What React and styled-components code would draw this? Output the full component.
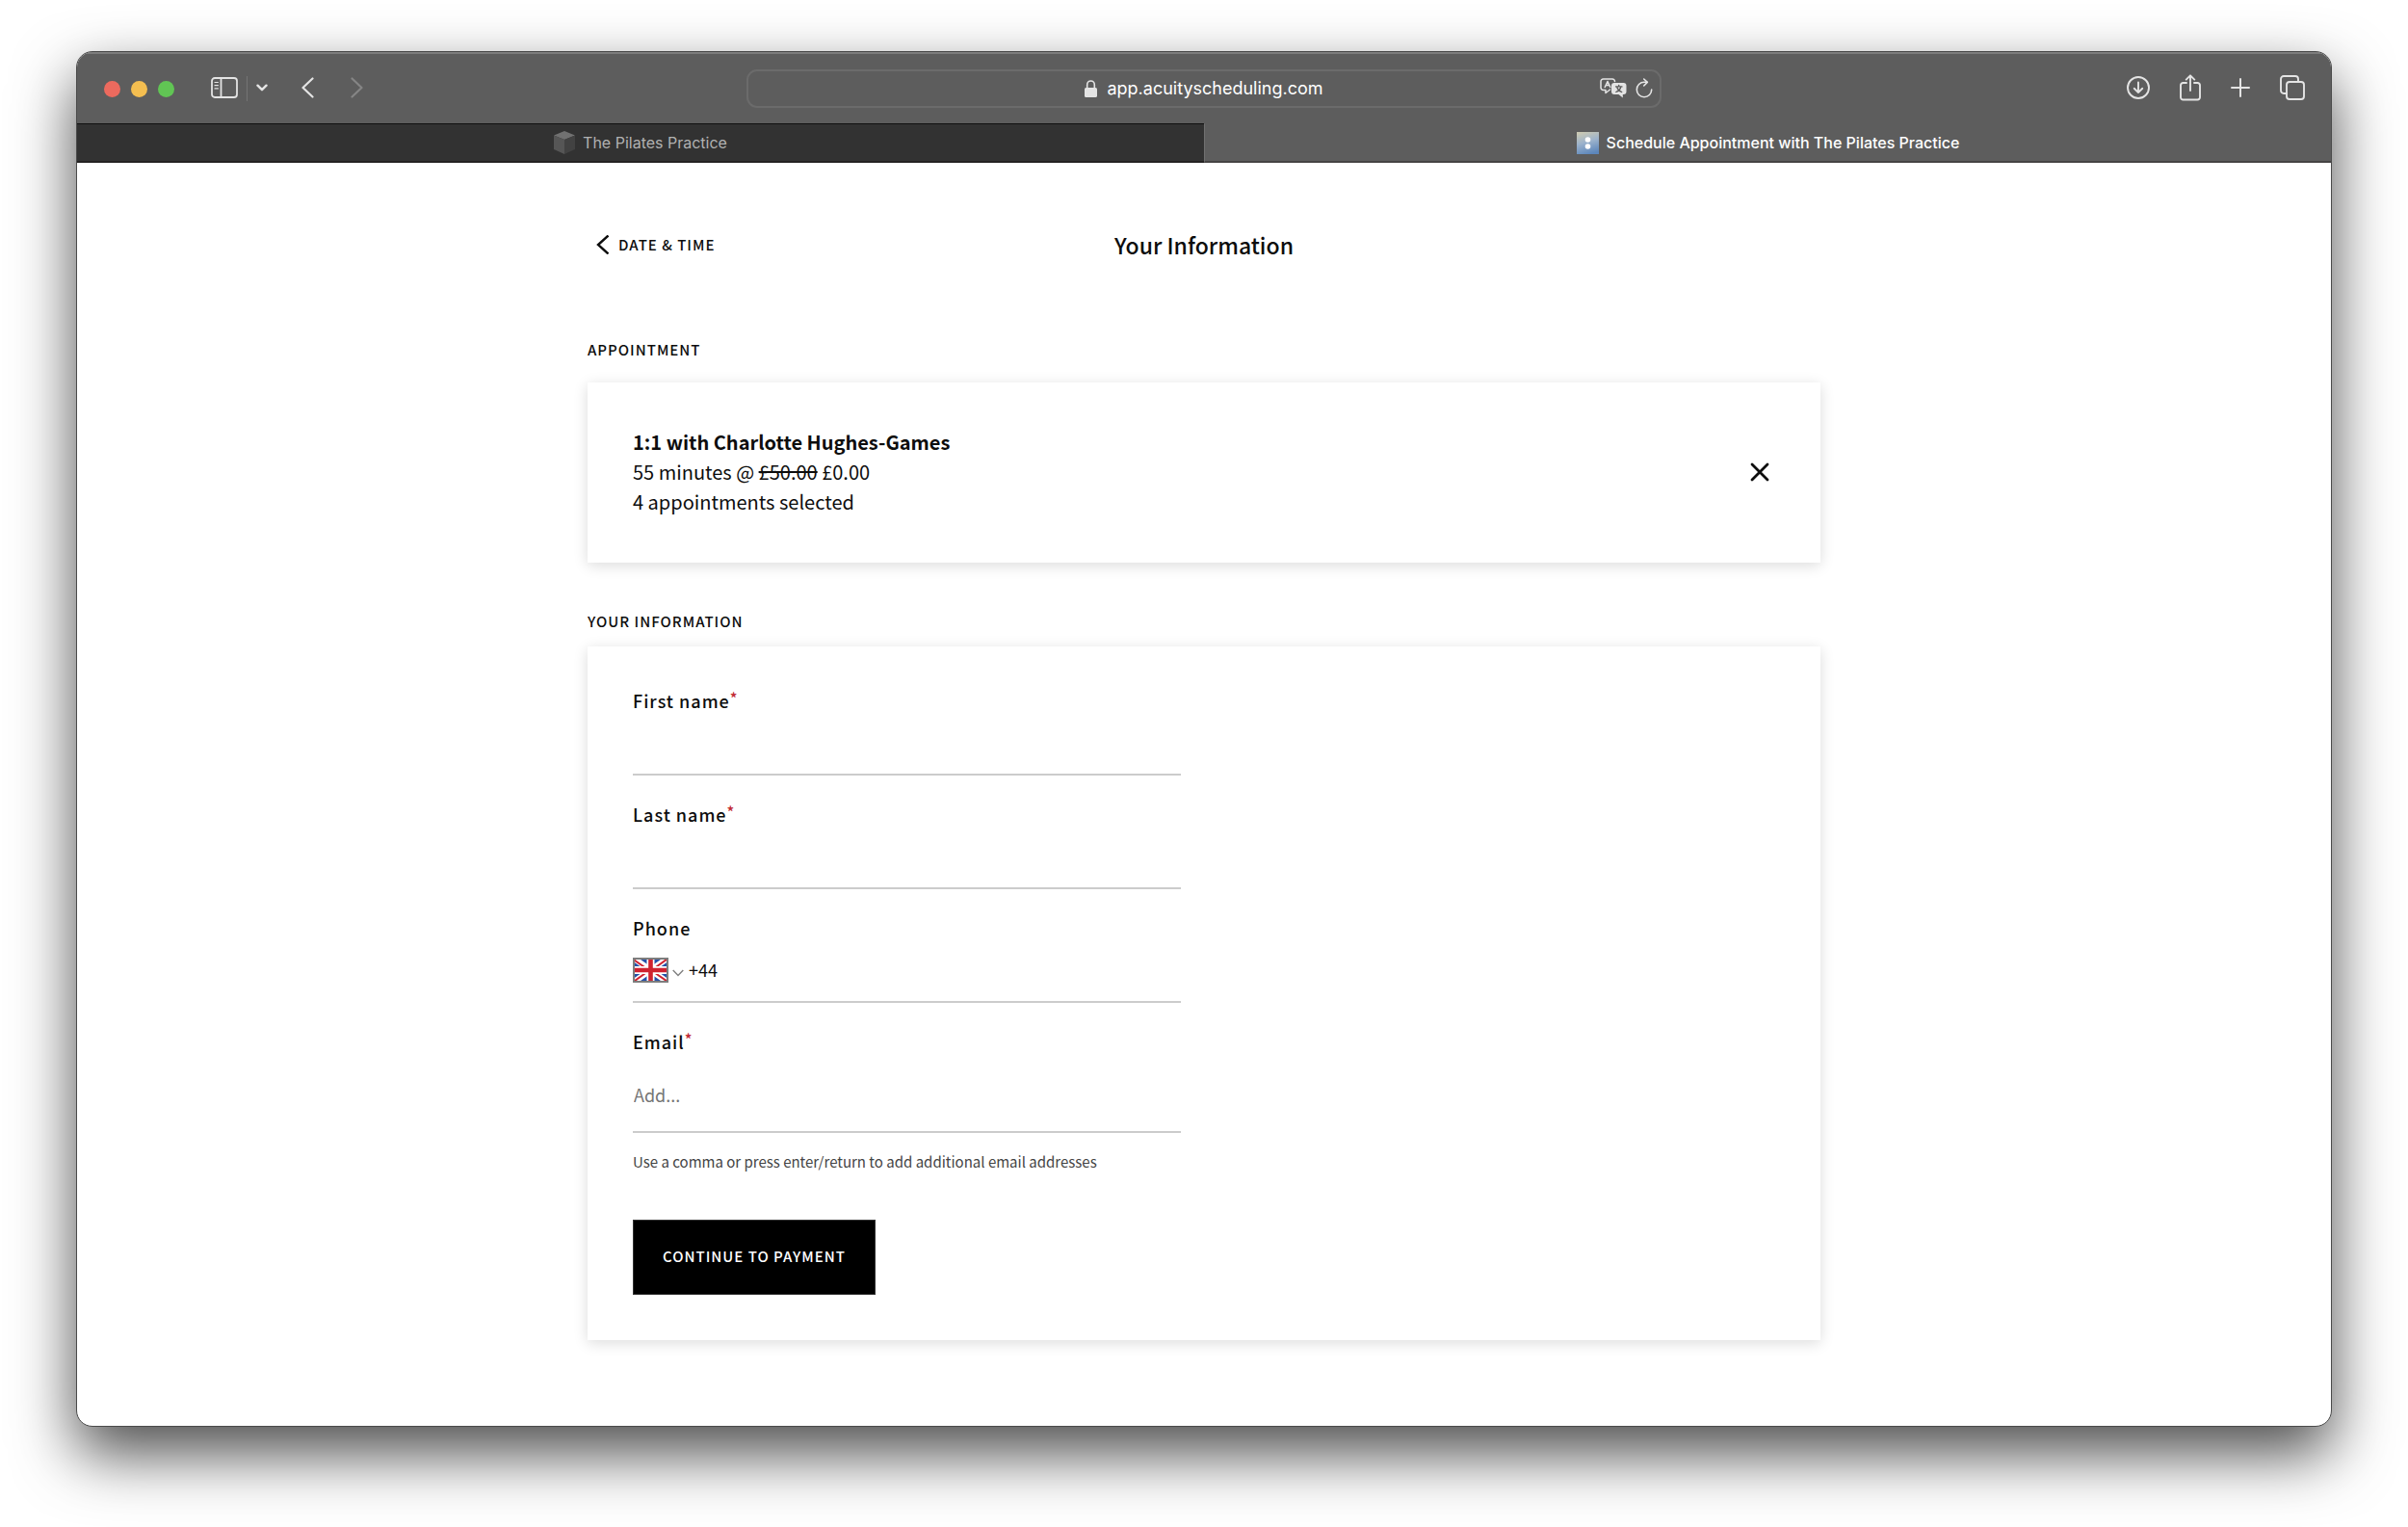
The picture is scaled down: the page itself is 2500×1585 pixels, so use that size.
import React from "react";
import styled, { createGlobalStyle, css } from "styled-components";

const uiFont = `Inter, "Liberation Sans", sans-serif`;
const pageFont = `"Noto Sans CJK SC", "Noto Sans", sans-serif`;

const GlobalStyle = createGlobalStyle`
  *, *::before, *::after { box-sizing: border-box; }
  body { margin: 0; background: #fff; color: #0d0d0d; font-family: ${pageFont}; }
  button, input { font: inherit; color: inherit; letter-spacing: inherit; }
  svg { display: block; flex: none; }
`;

const plainButton = css`
  display: flex;
  align-items: center;
  justify-content: center;
  padding: 0;
  border: 0;
  background: none;
  cursor: pointer;
`;

const Desktop = styled.div`
  padding: 53px 79px 104px;
`;

const Window = styled.div`
  overflow: hidden;
  border: 1px solid #4a4a4a;
  border-radius: 17px;
  background: #fff;
  box-shadow: 0 28px 64px rgba(0, 0, 0, 0.7);
`;

const Toolbar = styled.header`
  display: grid;
  grid-template-columns: 1fr minmax(0, 950px) 1fr;
  align-items: center;
  height: 74px;
  border-top: 2px solid #7c7c7c;
  background: #5d5d5d;
  color: #e4e4e4;
  font-family: ${uiFont};
`;

const ToolGroup = styled.div`
  display: flex;
  align-items: center;
  justify-content: ${(p) => (p.$end ? "flex-end" : "flex-start")};
  gap: ${(p) => p.$gap || 0}px;
  padding: 0 27px 0 28px;
`;

const Lights = styled.div`
  display: flex;
  gap: 11px;
  margin-right: 38px;
`;

const Light = styled.button`
  width: 17px;
  height: 17px;
  padding: 0;
  border: 0;
  border-radius: 50%;
  background: ${(p) => p.$color};
`;

const Tool = styled.button`
  ${plainButton}
  color: ${(p) => (p.$dim ? "#858585" : "#e4e4e4")};
  margin-right: ${(p) => p.$after || 0}px;
  margin-bottom: 2px;
`;

const Divider = styled.span`
  width: 1px;
  height: 26px;
  margin: 0 9px;
  background: #747474;
`;

const AddressBar = styled.div`
  display: grid;
  grid-template-columns: 1fr auto 1fr;
  align-items: center;
  height: 40px;
  padding: 0 7px;
  border: 2px solid #6b6b6b;
  border-radius: 11px;
`;

const AddressField = styled.label`
  display: flex;
  align-items: center;
  gap: 10px;
  grid-column: 2;
`;

const AddressInput = styled.input`
  field-sizing: content;
  padding: 0;
  border: 0;
  outline: 0;
  background: none;
  color: #fff;
  font-size: 18px;
  line-height: 24px;
`;

const AddressActions = styled.div`
  display: flex;
  align-items: center;
  justify-content: flex-end;
  gap: 9px;
`;

const TabStrip = styled.nav`
  display: grid;
  grid-template-columns: 1fr 1fr;
  height: 41px;
  font-family: ${uiFont};
`;

const Tab = styled.button`
  ${plainButton}
  gap: 8px;
  border-bottom: 2px solid ${(p) => (p.$active ? "#454343" : "#242222")};
  border-top: 1px solid ${(p) => (p.$active ? "#5d5d5d" : "#101010")};
  border-left: ${(p) => (p.$active ? "1px solid #707070" : "0")};
  background: ${(p) => (p.$active ? "#5d5d5d" : "#323232")};
  color: ${(p) => (p.$active ? "#fff" : "#b1b1b1")};
  font-size: 16px;
  font-weight: ${(p) => (p.$active ? 500 : 400)};
  line-height: 24px;
`;

const Page = styled.main`
  max-width: 1280px;
  margin: 0 auto;
  padding: 69px 0 89px;
`;

const PageHeader = styled.div`
  display: grid;
  grid-template-columns: 1fr auto 1fr;
  align-items: center;
  margin-bottom: 81px;
`;

const BackLink = styled.a`
  display: flex;
  align-items: center;
  justify-self: start;
  gap: 9px;
  padding-left: 9px;
  color: inherit;
  font-size: 15px;
  font-weight: 500;
  letter-spacing: 1px;
  line-height: 24px;
  text-decoration: none;
  text-transform: uppercase;
`;

const PageTitle = styled.h1`
  margin: 0;
  font-size: 23px;
  font-weight: 500;
  line-height: 32px;
`;

const Caption = styled.h2`
  margin: 0 0 ${(p) => p.$gap}px;
  font-size: 15px;
  font-weight: 500;
  letter-spacing: 1px;
  line-height: 24px;
  text-transform: uppercase;
`;

const Card = styled.section`
  padding: 44px 47px 47px;
  background: #fff;
  box-shadow: 0 3px 14px rgba(0, 0, 0, 0.14);
`;

const AppointmentCard = styled(Card)`
  display: flex;
  align-items: center;
  justify-content: space-between;
  margin-bottom: 49px;
  padding: 46px 47px 48px;
`;

const Line = styled.p`
  margin: 0;
  font-size: 20px;
  font-weight: ${(p) => (p.$strong ? 600 : 400)};
  line-height: 31px;
`;

const RemoveButton = styled.button`
  ${plainButton}
  width: 32px;
  height: 32px;
`;

const Form = styled.form`
  width: 48%;
`;

const Field = styled.div`
  margin-bottom: ${(p) => (p.$last ? 18 : 28)}px;
`;

const Label = styled.label`
  display: block;
  font-size: 18px;
  font-weight: 500;
  letter-spacing: 1px;
  line-height: 24px;
`;

const Required = styled.sup`
  color: #c22b35;
  font-size: 16px;
  font-weight: 500;
  line-height: 0;
  vertical-align: 4px;
`;

const InputRow = styled.div`
  display: flex;
  align-items: center;
  height: ${(p) => (p.$tall ? 83 : 66)}px;
  padding-top: ${(p) => (p.$tall ? 6 : 0)}px;
  border-bottom: 2px solid #ccc;
`;

const TextInput = styled.input`
  flex: 1;
  min-width: 0;
  height: 32px;
  padding: 0 0 2px 1px;
  border: 0;
  outline: 0;
  background: none;
  font-size: 18px;
  &::placeholder { color: #757575; opacity: 1; }
`;

const CountryButton = styled.button`
  ${plainButton}
  gap: 4px;
  margin-right: 4px;
`;

const Hint = styled.p`
  margin: 0 0 48px;
  color: #444;
  font-size: 15px;
  line-height: 24px;
`;

const Submit = styled.button`
  height: 78px;
  padding: 0 30px 3px;
  border: 1px solid #333;
  background: #000;
  color: #fff;
  cursor: pointer;
  font-size: 15px;
  font-weight: 500;
  letter-spacing: 1px;
  text-transform: uppercase;
`;

const stroke = (width) => ({
  fill: "none",
  stroke: "currentColor",
  strokeWidth: width,
  strokeLinecap: "round",
  strokeLinejoin: "round",
  "aria-hidden": true,
});

const SidebarIcon = () => (
  <svg width="28" height="22" viewBox="0 0 28 22" {...stroke(1.8)}>
    <rect x="1" y="1" width="26" height="20" rx="3" />
    <path d="M10.5 1v20" />
    <path d="M4 5.5h3.4M4 8.7h3.4M4 11.9h3.4" strokeWidth="1.2" />
  </svg>
);

const SmallChevron = () => (
  <svg width="12" height="8" viewBox="0 0 12 8" {...stroke(2.4)}>
    <path d="M1.500 1.700L6 6.200l4.500-4.500" />
  </svg>
);

const BackIcon = () => (
  <svg width="13" height="22" viewBox="0 0 13 22" {...stroke(2.2)}>
    <path d="M11.500 1.500L1.500 11l10 9.500" />
  </svg>
);

const ForwardIcon = () => (
  <svg width="13" height="22" viewBox="0 0 13 22" {...stroke(2.2)}>
    <path d="M1.500 1.500l10 9.500l-10 9.500" />
  </svg>
);

const LockIcon = () => (
  <svg width="13" height="18" viewBox="0 0 13 18" aria-hidden="true">
    <path d="M2.700 9V5a3.800 4 0 0 1 7.600 0v4" fill="none" stroke="#e4e4e4" strokeWidth="1.600" />
    <rect y="8" width="13" height="10" rx="1.600" fill="#e4e4e4" />
  </svg>
);

const TranslateIcon = () => (
  <svg width="28" height="21" viewBox="0 0 28 21" {...stroke(1.500)}>
    <path d="M10.500 12L6 15.500v-3H3.500a2.500 2.500 0 0 1-2.500-2.500V3.500A2.500 2.500 0 0 1 3.500 1h9.500a2.500 2.500 0 0 1 2.500 2.500" />
    <path d="M5.200 9.500L8 3.500l2.800 6M6.200 7.600h3.600" />
    <path
      d="M15 5h9.500a3 3 0 0 1 3 3v6a3 3 0 0 1-3 3h-.7v3.500L19.500 17H15a3 3 0 0 1-3-3V8a3 3 0 0 1 3-3z"
      fill="currentColor"
      stroke="none"
    />
    <path d="M16.500 8.900h6.500M19.700 7.300v1.600M21.800 9c-.5 2.500-2.500 4.500-5 5.500M17.700 9c.5 2.500 2.500 4.500 5 5.500" stroke="#5d5d5d" strokeWidth="1.300" />
  </svg>
);

const ReloadIcon = () => (
  <svg width="18" height="21" viewBox="0 0 18 21" {...stroke(1.600)}>
    <path d="M16.700 12a7.700 7.700 0 1 1-7.700-7.700h3" />
    <path d="M8.700 1L12.300 4.400L8.700 8" />
  </svg>
);

const DownloadIcon = () => (
  <svg width="24" height="24" viewBox="0 0 24 24" {...stroke(1.900)}>
    <circle cx="12" cy="12" r="11" />
    <path d="M12 6.500v10.500M7.700 12.800l4.300 4.200l4.300-4.200" />
  </svg>
);

const ShareIcon = () => (
  <svg width="22" height="28" viewBox="0 0 22 28" {...stroke(1.900)}>
    <path d="M7 9H3.500a2.500 2.500 0 0 0-2.500 2.500v12.500A2.500 2.500 0 0 0 3.500 26.500h15a2.500 2.500 0 0 0 2.500-2.500v-12.500A2.500 2.500 0 0 0 18.500 9H15" />
    <path d="M11 17V1.500M6.700 5.600L11 1.300l4.300 4.300" />
  </svg>
);

const PlusIcon = () => (
  <svg width="20" height="20" viewBox="0 0 20 20" {...stroke(2)}>
    <path d="M10 1v18M1 10h18" />
  </svg>
);

const TabsIcon = () => (
  <svg width="26" height="26" viewBox="0 0 26 26" {...stroke(1.900)}>
    <rect x="7" y="7" width="18" height="18" rx="3" />
    <path d="M7 19H4a3 3 0 0 1-3-3V4a3 3 0 0 1 3-3h12a3 3 0 0 1 3 3v3" />
  </svg>
);

const CubeIcon = () => (
  <svg width="22" height="24" viewBox="0 0 22 24" aria-hidden="true">
    <path d="M11 0l11 4.500L11 9L0 4.500z" fill="#717171" />
    <path d="M0 4.500L11 9v15L0 19z" fill="#565656" />
    <path d="M22 4.500L11 9v15l11-5z" fill="#424242" />
  </svg>
);

const AcuityIcon = () => (
  <svg width="23" height="23" viewBox="0 0 23 23" aria-hidden="true">
    <defs>
      <linearGradient id="acuity" x1="0.300" y1="0" x2="0.600" y2="1">
        <stop offset="0" stopColor="#c9c8b4" />
        <stop offset="0.450" stopColor="#9db3cc" />
        <stop offset="1" stopColor="#5c86bb" />
      </linearGradient>
    </defs>
    <rect width="23" height="23" fill="url(#acuity)" />
    <circle cx="11.500" cy="8" r="2.800" fill="#fff" />
    <circle cx="11.500" cy="15" r="2.800" fill="#fff" />
  </svg>
);

const DateBackIcon = () => (
  <svg width="14" height="20" viewBox="0 0 14 20" fill="none" stroke="currentColor" strokeWidth="2.400" aria-hidden="true">
    <path d="M12.500 .5L2 10l10.500 9.500" />
  </svg>
);

const CloseIcon = () => (
  <svg width="20" height="20" viewBox="0 0 20 20" {...stroke(2.800)}>
    <path d="M2 2l16 16M18 2L2 18" />
  </svg>
);

const FlagIcon = () => (
  <svg width="37" height="26" viewBox="0 0 37 26" aria-hidden="true">
    <rect width="37" height="26" fill="#2450a8" />
    <path d="M0 0l37 26M37 0L0 26" stroke="#fff" strokeWidth="6" />
    <path d="M0 1.500l16 11M21 12l16-11.500M0 25.500l16-11.500M21 14.500l16 11" stroke="#cf2230" strokeWidth="2" />
    <path d="M18.500 0v26M0 13h37" stroke="#fff" strokeWidth="8" />
    <path d="M18.500 0v26M0 13h37" stroke="#cf2230" strokeWidth="4.600" />
    <rect x="1" y="1" width="35" height="24" fill="none" stroke="#7d7d7d" strokeWidth="2" />
  </svg>
);

const CountryChevron = () => (
  <svg width="12" height="20" viewBox="0 0 12 20" fill="none" stroke="#808080" strokeWidth="1.400" aria-hidden="true">
    <path d="M.7 10L6 15.500L11.300 10" />
  </svg>
);

function FormField({ id, label, required, tall, last, lead, ...input }) {
  return (
    <Field $last={last}>
      <Label htmlFor={id}>
        {label}
        {required && <Required>*</Required>}
      </Label>
      <InputRow $tall={tall}>
        {lead}
        <TextInput id={id} {...input} />
      </InputRow>
    </Field>
  );
}

export default function App() {
  return (
    <Desktop>
      <GlobalStyle />
      <Window>
        <Toolbar>
          <ToolGroup>
            <Lights>
              <Light $color="#ec6a5e" aria-label="Close" />
              <Light $color="#f4be50" aria-label="Minimise" />
              <Light $color="#61c554" aria-label="Zoom" />
            </Lights>
            <Tool aria-label="Sidebar"><SidebarIcon /></Tool>
            <Divider />
            <Tool aria-label="Tab groups" $after={35}><SmallChevron /></Tool>
            <Tool aria-label="Back" $after={38}><BackIcon /></Tool>
            <Tool aria-label="Forward" $dim><ForwardIcon /></Tool>
          </ToolGroup>
          <AddressBar>
            <AddressField>
              <LockIcon />
              <AddressInput aria-label="Address" defaultValue="app.acuityscheduling.com" />
            </AddressField>
            <AddressActions>
              <Tool aria-label="Translate"><TranslateIcon /></Tool>
              <Tool aria-label="Reload"><ReloadIcon /></Tool>
            </AddressActions>
          </AddressBar>
          <ToolGroup $end $gap={31}>
            <Tool aria-label="Downloads"><DownloadIcon /></Tool>
            <Tool aria-label="Share"><ShareIcon /></Tool>
            <Tool aria-label="New tab"><PlusIcon /></Tool>
            <Tool aria-label="Tab overview"><TabsIcon /></Tool>
          </ToolGroup>
        </Toolbar>
        <TabStrip>
          <Tab><CubeIcon />The Pilates Practice</Tab>
          <Tab $active><AcuityIcon />Schedule Appointment with The Pilates Practice</Tab>
        </TabStrip>
        <Page>
          <PageHeader>
            <BackLink href="#date-time"><DateBackIcon />Date &amp; Time</BackLink>
            <PageTitle>Your Information</PageTitle>
          </PageHeader>
          <Caption $gap={22}>Appointment</Caption>
          <AppointmentCard>
            <div>
              <Line $strong>1:1 with Charlotte Hughes-Games</Line>
              <Line>55 minutes @ <s>£50.00</s> £0.00</Line>
              <Line>4 appointments selected</Line>
            </div>
            <RemoveButton aria-label="Remove appointment"><CloseIcon /></RemoveButton>
          </AppointmentCard>
          <Caption $gap={14}>Your Information</Caption>
          <Card>
            <Form onSubmit={(e) => e.preventDefault()}>
              <FormField id="first-name" label="First name" required />
              <FormField id="last-name" label="Last name" required />
              <FormField
                id="phone"
                label="Phone"
                type="tel"
                defaultValue="+44"
                lead={
                  <CountryButton type="button" aria-label="Country code">
                    <FlagIcon />
                    <CountryChevron />
                  </CountryButton>
                }
              />
              <FormField id="email" label="Email" placeholder="Add..." required tall last />
              <Hint>Use a comma or press enter/return to add additional email addresses</Hint>
              <Submit type="submit">Continue to payment</Submit>
            </Form>
          </Card>
        </Page>
      </Window>
    </Desktop>
  );
}
